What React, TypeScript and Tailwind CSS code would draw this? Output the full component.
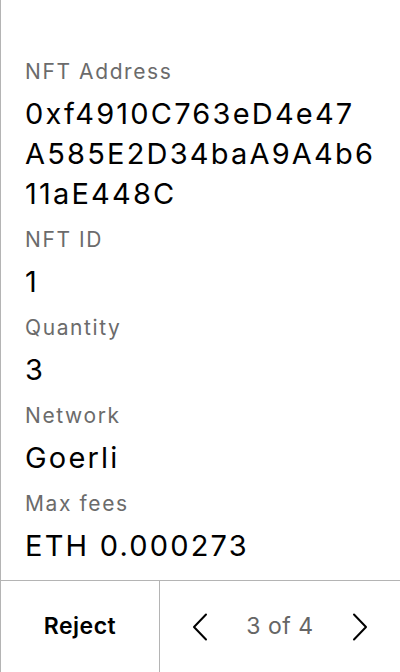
import React from 'react'

type Field = { label: string; lines: string[] }

const fields: Field[] = [
  { label: 'NFT Address', lines: ['0xf4910C763eD4e47', 'A585E2D34baA9A4b6', '11aE448C'] },
  { label: 'NFT ID', lines: ['1'] },
  { label: 'Quantity', lines: ['3'] },
  { label: 'Network', lines: ['Goerli'] },
  { label: 'Max fees', lines: ['ETH 0.000273'] },
]

function Chevron({ dir }: { dir: 'left' | 'right' }) {
  return (
    <svg width="16" height="28" viewBox="0 0 16 28" fill="none">
      <polyline
        points={dir === 'left' ? '14,1.5 2,14 14,26.5' : '2,1.5 14,14 2,26.5'}
        stroke="#000"
        strokeWidth="2"
        strokeLinecap="round"
        strokeLinejoin="round"
      />
    </svg>
  )
}

export default function App() {
  return (
    <div className="flex h-[672px] w-[400px] flex-col border-l border-[#b4b4b4] bg-white font-['Inter',sans-serif] text-black">
      <div className="flex-1 pl-6 pr-4 pt-[58px]">
        {fields.map((f) => (
          <div key={f.label}>
            <div className="mb-2 text-[21px] leading-7 tracking-[1.6px] text-[#6b6b6b]">{f.label}</div>
            <div className="mb-3 text-[29px] leading-10 tracking-[2.2px]">
              {f.lines.map((l) => (
                <span key={l} className="block">
                  {l}
                </span>
              ))}
            </div>
          </div>
        ))}
      </div>
      <div className="flex h-[92px] border-t border-[#b4b4b4]">
        <button className="flex w-[159px] items-center justify-center border-r border-[#b4b4b4] text-[23px] font-semibold tracking-[0.5px]">
          Reject
        </button>
        <div className="flex flex-1 items-center justify-between pl-8 pr-8">
          <Chevron dir="left" />
          <span className="text-[23px] tracking-[0.5px] text-[#666]">3 of 4</span>
          <Chevron dir="right" />
        </div>
      </div>
    </div>
  )
}
